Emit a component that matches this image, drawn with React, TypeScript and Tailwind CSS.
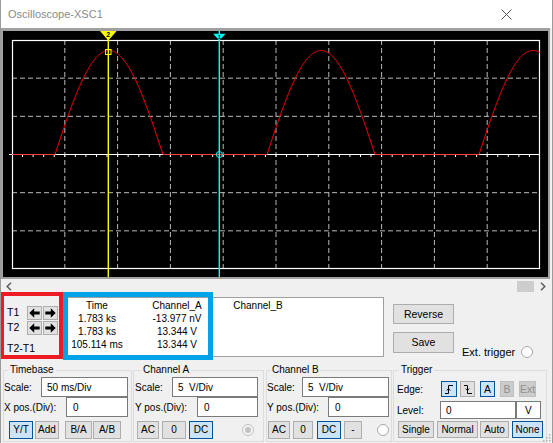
import React from 'react';

type BtnProps = {
  children: React.ReactNode;
  className?: string;
  active?: boolean;
  disabled?: boolean;
};

const Btn = ({ children, className = '', active, disabled }: BtnProps) => {
  const look = active
    ? 'bg-[#cce4f7] border-[#005499]'
    : disabled
    ? 'bg-[#cccccc] border-[#bfbfbf] text-[#8f8f8f]'
    : 'bg-[#e1e1e1] border-[#adadad]';
  return (
    <div className={`flex items-center justify-center border leading-none ${look} ${className}`}>
      {children}
    </div>
  );
};

const Field = ({ value, className = '' }: { value: string; className?: string }) => (
  <div className={`h-full bg-white border border-[#7a7a7a] flex items-center whitespace-pre ${className}`}>
    {value}
  </div>
);

const Radio = ({ dot, className = '' }: { dot?: boolean; className?: string }) => (
  <div
    className={`w-[12px] h-[12px] rounded-full border flex items-center justify-center ${
      dot ? 'bg-[#f4f4f4] border-[#c2c2c2]' : 'bg-white border-[#a8a8a8]'
    } ${className}`}
  >
    {dot && <div className="w-[6px] h-[6px] rounded-full bg-[#c2c2c2]" />}
  </div>
);

const Arrow = ({ dir }: { dir: 'l' | 'r' }) => (
  <svg width="11" height="10" viewBox="0 0 11 10">
    {dir === 'l' ? (
      <path d="M0.3 5 L5.2 0.3 L5.2 3.4 L10.7 3.4 L10.7 6.6 L5.2 6.6 L5.2 9.7 Z" fill="#000" />
    ) : (
      <path d="M10.7 5 L5.8 0.3 L5.8 3.4 L0.3 3.4 L0.3 6.6 L5.8 6.6 L5.8 9.7 Z" fill="#000" />
    )}
  </svg>
);

const Screen = () => {
  const L = 12, R = 540, T = 40, B = 269, base = 154.5;
  const dx = (R - L) / 10;
  const dy = (B - T) / 6;
  const pts: string[] = [];
  for (let x = L; x <= R + 0.01; x += 0.5) {
    const t = (((x - 55) % 212) + 212) % 212;
    const y = t < 108 ? base - 104 * Math.sin((Math.PI * t) / 108) : base;
    pts.push(`${x.toFixed(1)},${y.toFixed(2)}`);
  }
  const vx = [1, 2, 3, 4, 5, 6, 7, 8, 9].map((k) => L + dx * k);
  const hy = [1, 2, 4, 5].map((k) => T + dy * k);
  const ticks = Array.from({ length: 49 }, (_, i) => L + ((i + 1) * dx) / 5);

  return (
    <svg width="544" height="246" viewBox="3 31 544 246" className="block">
      {vx.map((x) => (
        <line key={x} x1={x} y1={T} x2={x} y2={B} stroke="#b9b9b9" strokeWidth="1" strokeDasharray="5 3" />
      ))}
      {hy.map((y) => (
        <line key={y} x1={L} y1={y} x2={R} y2={y} stroke="#b9b9b9" strokeWidth="1" strokeDasharray="5 3" />
      ))}
      <rect x={L + 0.5} y={T + 0.5} width={R - L - 1} height={B - T - 1} fill="none" stroke="#fff" strokeWidth="1.2" />
      <line x1={9} y1={base} x2={R} y2={base} stroke="#fff" strokeWidth="1.2" />
      {ticks.map((x) => (
        <line key={x} x1={x} y1={base} x2={x} y2={base + 2.5} stroke="#fff" strokeWidth="1" />
      ))}
      <polyline points={pts.join(' ')} fill="none" stroke="#ff0000" strokeWidth="1" />

      {/* cursor 2 (yellow) */}
      <line x1={108.3} y1={31} x2={108.3} y2={277} stroke="#ffff00" strokeWidth="1.4" />
      <polygon points="100,31 116.6,31 108.3,40.5" fill="#ffff00" />
      <text x={108.3} y={37} fontSize="7" fontWeight="bold" textAnchor="middle" fill="#000" fontFamily="Liberation Sans, Arial, sans-serif">
        2
      </text>
      <rect x={105.6} y={49.5} width={5.4} height={5} fill="none" stroke="#ffff00" strokeWidth="1" />

      {/* cursor 1 (cyan) */}
      <line x1={219.3} y1={31} x2={219.3} y2={277} stroke="#00ffff" strokeWidth="1.4" />
      <polygon points="213.2,33.8 225.6,33.8 219.3,40.5" fill="#00ffff" />
      <text x={219.3} y={38.6} fontSize="6" fontWeight="bold" textAnchor="middle" fill="#000" fontFamily="Liberation Sans, Arial, sans-serif">
        1
      </text>
      <circle cx={219.3} cy={base} r={3} fill="none" stroke="#00ffff" strokeWidth="1" />
    </svg>
  );
};

export default function App() {
  return (
    <div className="relative w-[553px] h-[443px] overflow-hidden bg-[#f0f0f0] border-x border-[#9b9b9b] font-['Liberation_Sans',Arial,sans-serif] text-[10px] text-black">
      {/* title bar */}
      <div className="h-[28px] bg-white flex items-center justify-between pl-[7px] pr-[40px]">
        <span className="text-[11px] text-[#8a8a8a]">Oscilloscope-XSC1</span>
        <svg width="11" height="11" viewBox="0 0 11 11">
          <path d="M0.5 0.5 L10.5 10.5 M10.5 0.5 L0.5 10.5" stroke="#555" strokeWidth="1" />
        </svg>
      </div>

      {/* screen */}
      <div className="mr-[2px] border-t-[3px] border-x-2 border-b-2 border-[#a0a0a0]">
        <div className="h-[246px] bg-black">
          <Screen />
        </div>
      </div>

      {/* scrollbar */}
      <div className="h-[14px] flex items-center justify-between pl-[5px] pr-[6px]">
        <svg width="6" height="9" viewBox="0 0 6 9">
          <path d="M5 0.8 L1.2 4.5 L5 8.2" fill="none" stroke="#606060" strokeWidth="1.6" />
        </svg>
        <div className="flex items-center gap-[6px]">
          <div className="w-[17px] h-[11px] bg-[#cdcdcd]" />
          <svg width="6" height="9" viewBox="0 0 6 9">
            <path d="M1 0.8 L4.8 4.5 L1 8.2" fill="none" stroke="#606060" strokeWidth="1.6" />
          </svg>
        </div>
      </div>

      {/* cursor readout row */}
      <div className="h-[71px] flex">
        <div className="w-[58px] pl-[6px] pt-[12px]">
          <div className="h-[15px] flex items-center">
            <span className="w-[20px] text-[10.5px]">T1</span>
            <Btn className="w-[15px] h-[14px]"><Arrow dir="l" /></Btn>
            <Btn className="w-[15px] h-[14px] ml-[1px]"><Arrow dir="r" /></Btn>
          </div>
          <div className="h-[15px] flex items-center">
            <span className="w-[20px] text-[10.5px]">T2</span>
            <Btn className="w-[15px] h-[14px]"><Arrow dir="l" /></Btn>
            <Btn className="w-[15px] h-[14px] ml-[1px]"><Arrow dir="r" /></Btn>
          </div>
          <div className="mt-[7px] leading-[12px] text-[10.5px]">T2-T1</div>
        </div>

        <div className="mt-[4px] w-[325px] h-[60px] bg-white border border-[#a0a0a0] pt-[1px]">
          <div className="grid grid-cols-[74px_86px_76px] leading-[13px] text-center whitespace-pre">
            <span>Time</span>
            <span>Channel_A</span>
            <span>Channel_B</span>
            <span>1.783 ks</span>
            <span>-13.977 nV</span>
            <span />
            <span>1.783 ks</span>
            <span>13.344 V</span>
            <span />
            <span>105.114 ms</span>
            <span>13.344 V</span>
            <span />
          </div>
        </div>

        <div className="ml-[9px] flex flex-col">
          <Btn className="mt-[11px] w-[61px] h-[20px] text-[10.5px]">Reverse</Btn>
          <Btn className="mt-[8px] w-[61px] h-[21px] text-[10.5px]">Save</Btn>
        </div>

        <div className="ml-[8px] mt-[53px] h-[12px] flex items-center">
          <span className="text-[11px]">Ext. trigger</span>
          <Radio className="ml-[6px]" />
        </div>
      </div>

      {/* controls */}
      <div className="flex">
        <fieldset className="ml-[2px] w-[129px] h-[78px] border border-[#dcdcdc]">
          <legend className="ml-[4px] px-[2px] leading-[12px]">Timebase</legend>
          <div className="pr-[3px]">
            <div className="mt-[1px] h-[20px] flex items-center">
              <span>Scale:</span>
              <Field value="50 ms/Div" className="ml-auto w-[87px] pl-[5px]" />
            </div>
            <div className="h-[20px] flex items-center">
              <span>X pos.(Div):</span>
              <Field value="0" className="ml-auto w-[62px] pl-[6px]" />
            </div>
            <div className="mt-[4px] h-[18px] flex pl-[5px]">
              <Btn active className="w-[24px]">Y/T</Btn>
              <Btn className="w-[24px] ml-[2px]">Add</Btn>
              <Btn className="w-[27px] ml-[6px]">B/A</Btn>
              <Btn className="w-[28px] ml-[1px]">A/B</Btn>
            </div>
          </div>
        </fieldset>

        <fieldset className="ml-[1px] w-[131px] h-[78px] border border-[#dcdcdc]">
          <legend className="ml-[7px] px-[2px] leading-[12px]">Channel A</legend>
          <div className="pl-[1px] pr-[5px]">
            <div className="mt-[1px] h-[20px] flex items-center">
              <span>Scale:</span>
              <Field value="5  V/Div" className="ml-auto w-[86px] pl-[5px]" />
            </div>
            <div className="h-[20px] flex items-center">
              <span>Y pos.(Div):</span>
              <Field value="0" className="ml-auto w-[61px] pl-[6px]" />
            </div>
            <div className="mt-[4px] h-[18px] flex items-center pl-[2px]">
              <Btn className="w-[22px] h-full">AC</Btn>
              <Btn className="w-[24px] h-full ml-[3px]">0</Btn>
              <Btn active className="w-[24px] h-full ml-[3px]">DC</Btn>
              <Radio dot className="ml-auto mr-[4px]" />
            </div>
          </div>
        </fieldset>

        <fieldset className="ml-[2px] w-[126px] h-[78px] border border-[#dcdcdc]">
          <legend className="ml-[4px] px-[1px] leading-[12px]">Channel B</legend>
          <div className="pr-[2px]">
            <div className="mt-[1px] h-[20px] flex items-center">
              <span>Scale:</span>
              <Field value="5  V/Div" className="ml-auto w-[87px] pl-[5px]" />
            </div>
            <div className="h-[20px] flex items-center">
              <span>Y pos.(Div):</span>
              <Field value="0" className="ml-auto w-[61px] pl-[6px]" />
            </div>
            <div className="mt-[4px] h-[18px] flex items-center pl-[1px]">
              <Btn className="w-[22px] h-full">AC</Btn>
              <Btn className="w-[20px] h-full ml-[3px]">0</Btn>
              <Btn active className="w-[24px] h-full ml-[4px]">DC</Btn>
              <Btn className="w-[18px] h-full ml-[3px]">-</Btn>
              <Radio className="ml-auto" />
            </div>
          </div>
        </fieldset>

        <fieldset className="ml-[1px] w-[154px] h-[78px] border border-[#dcdcdc]">
          <legend className="ml-[5px] px-[2px] leading-[12px]">Trigger</legend>
          <div className="pl-[3px]">
            <div className="mt-[5px] h-[16px] flex items-center">
              <span className="w-[44px]">Edge:</span>
              <Btn active className="w-[16px] h-full">
                <svg width="10" height="11" viewBox="0 0 10 11">
                  <path d="M1 9.5 H4.5 V1.5 H9" fill="none" stroke="#000" strokeWidth="1" />
                  <path d="M2.8 6.5 L4.5 4.6 L6.2 6.5" fill="none" stroke="#000" strokeWidth="1" />
                </svg>
              </Btn>
              <Btn className="w-[15px] h-full ml-[3px]">
                <svg width="10" height="11" viewBox="0 0 10 11">
                  <path d="M1 1.5 H4.5 V9.5 H9" fill="none" stroke="#000" strokeWidth="1" />
                  <path d="M2.8 4.5 L4.5 6.4 L6.2 4.5" fill="none" stroke="#000" strokeWidth="1" />
                </svg>
              </Btn>
              <Btn active className="w-[15px] h-full ml-[5px] text-[10.5px]">A</Btn>
              <Btn disabled className="w-[14px] h-full ml-[5px] text-[10.5px]">B</Btn>
              <Btn disabled className="w-[17px] h-full ml-[5px] text-[10.5px]">Ext</Btn>
            </div>
            <div className="mt-[4px] h-[18px] flex items-center">
              <span className="w-[43px]">Level:</span>
              <Field value="0" className="w-[76px] pl-[5px]" />
              <Field value="V" className="w-[25px] pl-[8px]" />
            </div>
            <div className="mt-[2px] h-[17px] flex pl-[1px]">
              <Btn className="w-[36px]">Single</Btn>
              <Btn className="w-[41px] ml-[3px]">Normal</Btn>
              <Btn className="w-[29px] ml-[2px]">Auto</Btn>
              <Btn active className="w-[31px] ml-[3px]">None</Btn>
            </div>
          </div>
        </fieldset>
      </div>

      {/* annotation boxes */}
      <div className="absolute left-[-1px] top-[292px] w-[63px] h-[67px] border-4 border-[#ed1c24]" />
      <div className="absolute left-[62px] top-[292px] w-[150px] h-[68px] border-[5px] border-[#00a2e8]" />

      {/* resize grip */}
      <svg className="absolute right-[1px] bottom-[1px]" width="9" height="9" viewBox="0 0 9 9">
        {[
          [7, 1], [7, 4], [4, 4], [7, 7], [4, 7], [1, 7],
        ].map(([x, y]) => (
          <rect key={`${x}-${y}`} x={x} y={y} width="1.5" height="1.5" fill="#b5b5b5" />
        ))}
      </svg>
    </div>
  );
}
